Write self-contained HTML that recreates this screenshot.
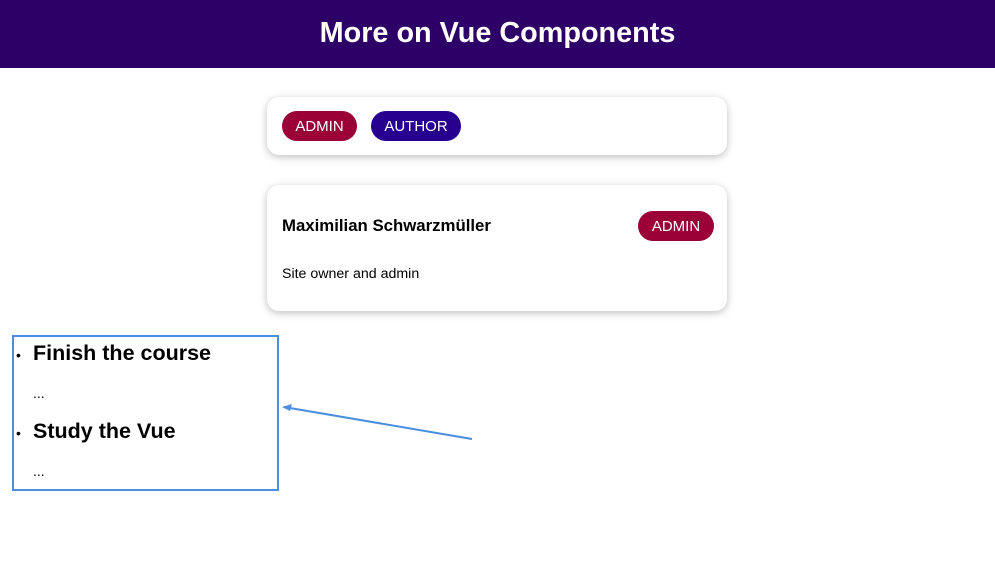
<!DOCTYPE html>
<html><head><style>
body{margin:0;font-family:"Liberation Sans",sans-serif;background:#fff;width:995px;height:571px;position:relative;overflow:hidden}
header{height:68px;background:#2d0068;color:#fff;text-align:center;font-weight:bold;font-size:28.8px;line-height:66px}
.card{position:absolute;left:267px;width:460px;background:#fff;border-radius:12px;box-shadow:0 2px 8px rgba(0,0,0,.26)}
.b{position:absolute;height:30px;line-height:32px;border-radius:15px;color:#fff;font-size:15px;text-align:center}
.ad{background:#9b0036}.au{background:#28008f}
.t{position:absolute;white-space:nowrap}
</style></head><body>
<header>More on Vue Components</header>
<div class="card" style="top:97px;height:58px">
<div class="b ad" style="left:15px;top:14px;width:75px">ADMIN</div>
<div class="b au" style="left:104px;top:14px;width:90px">AUTHOR</div>
</div>
<div class="card" style="top:185px;height:126px">
<div class="t" style="left:15px;top:31px;font-weight:bold;font-size:16.8px">Maximilian Schwarzmüller</div>
<div class="b ad" style="left:371px;top:26px;width:76px">ADMIN</div>
<div class="t" style="left:15px;top:81px;font-size:14.2px">Site owner and admin</div>
</div>
<div style="position:absolute;left:12px;top:335px;width:263px;height:152px;border:2px solid #4a8ee0"></div>
<div class="t" style="left:16px;top:347px;font-size:14px">•</div>
<div class="t" style="left:33px;top:341px;font-size:21.5px;font-weight:bold">Finish the course</div>
<div class="t" style="left:33px;top:385px;font-size:14px">...</div>
<div class="t" style="left:16px;top:425px;font-size:14px">•</div>
<div class="t" style="left:33px;top:419px;font-size:21.5px;font-weight:bold">Study the Vue</div>
<div class="t" style="left:33px;top:463px;font-size:14px">...</div>
<svg style="position:absolute;left:0;top:0" width="995" height="571">
<line x1="472" y1="439" x2="284" y2="407" stroke="#4a8ee0" stroke-width="2"/>
<path d="M282 407 L292 404 L290 411 Z" fill="#4a8ee0"/>
</svg>
</body></html>
